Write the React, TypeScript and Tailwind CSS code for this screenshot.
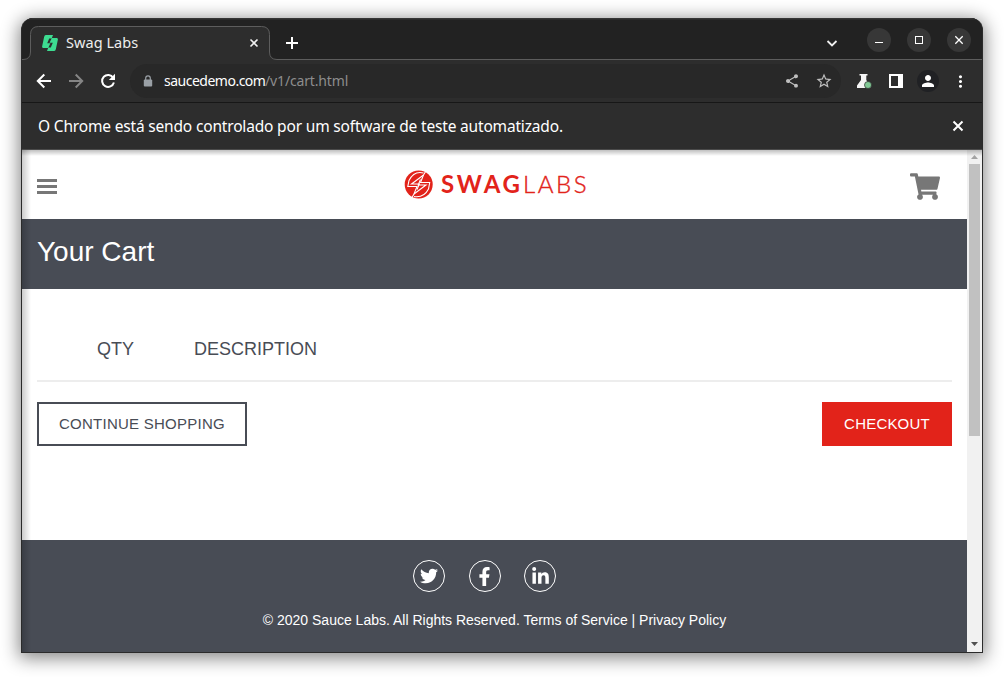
import React from "react";
import { MdMoreVert, MdPerson, MdShare, MdStarBorder } from "react-icons/md";
import { FaFacebookF, FaLinkedinIn, FaShoppingCart, FaTwitter } from "react-icons/fa";

interface LineIconProps {
  d: string;
  size: number;
  color?: string;
  weight?: number;
  className?: string;
}

function LineIcon({ d, size, color = "white", weight = 2, className }: LineIconProps) {
  return (
    <svg className={className} width={size} height={size} viewBox={`0 0 ${size} ${size}`} fill="none">
      <path d={d} stroke={color} strokeWidth={weight} />
    </svg>
  );
}

function SauceIcon() {
  return (
    <svg width="16" height="16" viewBox="0 0 16 16" fill="#3ddc91">
      <path d="M3.800 0H11L9.700 3.600H7.200L5.200 8.200H8.400L6.200 13H1.500Q-.3 13 .2 11L2.100 2Q2.500 0 3.800 0Z" />
      <path d="M12.200 16H5L6.300 12.400H8.800L10.800 7.800H7.600L9.800 3h4.700q1.800 0 1.300 2l-1.900 9q-.4 2-1.700 2Z" />
    </svg>
  );
}

function WindowButton({ children }: { children: React.ReactNode }) {
  return (
    <button className="flex h-6 w-6 items-center justify-center rounded-full bg-[#373737] text-white">
      {children}
    </button>
  );
}

function TabStrip() {
  return (
    <div className="relative h-[42px] shrink-0 bg-[#222222]">
      <svg className="absolute left-0 top-0" width="960" height="42" fill="none">
        <path
          d="M0 41.500H1Q8.500 41.500 8.500 34V16.500Q8.500 8.500 16.500 8.500H239.500Q247.500 8.500 247.500 16.500V34Q247.500 41.500 255 41.500H960V43H0Z"
          fill="#2d2d2d"
          stroke="#5d5d5d"
        />
        <path d="M0 .5H960" stroke="#363636" strokeWidth="2" />
      </svg>
      <div className="relative flex h-full items-center">
        <div className="ml-5 flex w-[218px] items-center pt-[7px]">
          <SauceIcon />
          <span className="-mt-0.5 ml-2 text-[14.500px] leading-4 tracking-[0.050px] text-[#eeeeee]">Swag Labs</span>
          <LineIcon className="ml-auto" size={12} d="M2.500 2.500l7 7M9.500 2.500l-7 7" weight={1.6} color="#f0f0f0" />
        </div>
        <LineIcon className="ml-[26px] mt-[8px]" size={12} d="M6 0v12M0 6h12" />
        <LineIcon className="ml-auto mt-[8px]" size={12} d="M1.500 4l4.500 4.500l4.500-4.500" color="#eeeeee" weight={1.8} />
        <div className="ml-[29px] mr-[11px] flex gap-4 pt-0.5">
          <WindowButton>
            <span className="mt-[5px] h-px w-2 bg-white" />
          </WindowButton>
          <WindowButton>
            <span className="h-2 w-2 border border-white" />
          </WindowButton>
          <WindowButton>
            <LineIcon size={12} d="M2.300 2.300l7.400 7.400M9.700 2.300l-7.400 7.400" weight={1.3} />
          </WindowButton>
        </div>
      </div>
    </div>
  );
}

function Toolbar() {
  return (
    <div className="flex h-[43px] shrink-0 items-center border-b border-[#171717] bg-[#2d2d2d] text-white">
      <LineIcon className="ml-[14px]" size={16} d="M15 8H2M8.300 1.500L1.800 8l6.500 6.500" />
      <LineIcon className="ml-4" size={16} color="#858585" d="M1 8h13M7.700 1.500L14.200 8l-6.500 6.500" />
      <svg className="ml-4" width="16" height="16" viewBox="0 0 16 16" fill="none">
        <path d="M13.200 4.700A6 6 0 1 0 13.900 9.500" stroke="white" strokeWidth="2" />
        <path d="M15 .8V7H8.800Z" fill="white" />
      </svg>
      <div className="ml-[14px] flex h-[34px] w-[711px] items-center rounded-full bg-[#282828]">
        <svg className="ml-3" width="12" height="12" viewBox="0 0 12 12" fill="none">
          <rect x="1.800" y="4.500" width="8.400" height="7" rx="1" fill="#9aa0a6" />
          <path d="M3.700 5V3.200a2.300 2.300 0 0 1 4.600 0V5" stroke="#9aa0a6" strokeWidth="1.200" />
        </svg>
        <span className="ml-[10px] flex whitespace-nowrap text-[14px] leading-5">
          <span className="w-[101px] tracking-[-0.500px]">saucedemo.com</span>
          <span className="tracking-[-0.150px] text-[#8d8d8d]">/v1/cart.html</span>
        </span>
        <MdShare className="ml-auto" size={16} color="#bebebe" />
        <MdStarBorder className="ml-[15px] mr-[8px]" size={18} color="#bebebe" />
      </div>
      <svg className="ml-[15px]" width="16" height="16" viewBox="0 0 16 16">
        <path d="M3.500 1h8v1.500h-1.200V7L15 15H1v-2.500L5 7V2.500H3.500Z" fill="#f5f5f5" />
        <circle cx="12" cy="12" r="3.500" fill="#81c995" stroke="#2d2d2d" strokeWidth=".7" />
      </svg>
      <span className="ml-[17px] h-[14px] w-[14px] border-2 border-r-[5px] border-white bg-[#2d2d2d]" />
      <span className="ml-[14px] flex h-[22px] w-[22px] items-center justify-center rounded-full bg-[#202124]">
        <MdPerson size={18} />
      </span>
      <MdMoreVert className="ml-3" size={19} />
    </div>
  );
}

function InfoBar() {
  return (
    <div className="flex h-[47px] shrink-0 items-center justify-between border-b border-[#4a4a4a] bg-[#2d2d2d] pl-4 pr-[18px] text-white">
      <span className="text-[15.500px] leading-6 tracking-[-0.175px]">
        O Chrome está sendo controlado por um software de teste automatizado.
      </span>
      <LineIcon size={12} d="M1.500 1.500l9 9M10.500 1.500l-9 9" weight={2} />
    </div>
  );
}

function SwagLogo() {
  return (
    <svg width="184" height="32" viewBox="0 0 184 32">
      <circle cx="14.700" cy="16.500" r="14" fill="#e2231a" />
      <g fill="none" stroke="white" strokeWidth="1.100">
        <path d="M22.500 2 19.500 7M10 26 7 31" />
        <path d="M19.500 5Q10 2.500 5 12.500L3.800 18.500H13L10 26" />
        <path d="M10 28.500q10 1.500 14.500-7.500L25.700 14.500H16.500L19.500 7" />
        <path d="M19.500 7 7.500 16H15.300L13 21.500M10 26 22 17H14.200L16.500 11.500" />
      </g>
      <g fill="#e2231a" fontFamily="Lato, sans-serif" fontSize="24">
        <text x="37" y="25" fontWeight="700" textLength="79" lengthAdjust="spacing">SWAG</text>
        <text x="119" y="25" fontWeight="300" stroke="#e2231a" strokeWidth=".4" textLength="63.500" lengthAdjust="spacing">LABS</text>
      </g>
    </svg>
  );
}

function SocialLink({ children }: { children: React.ReactNode }) {
  return (
    <a className="flex h-8 w-8 items-center justify-center rounded-full border border-white">
      {children}
    </a>
  );
}

function CartPage() {
  return (
    <div className="flex w-[945px] flex-col bg-white font-['Liberation_Sans',Arial,sans-serif] text-[#484c55]">
      <header className="flex h-[69px] items-center justify-between pl-[15px] pr-[27px]">
        <div className="flex w-[31px] flex-col gap-[3px] pt-1">
          <span className="h-[3px] w-5 bg-[#777777]" />
          <span className="h-[3px] w-5 bg-[#777777]" />
          <span className="h-[3px] w-5 bg-[#777777]" />
        </div>
        <div className="mb-[2px] ml-[14px]">
          <SwagLogo />
        </div>
        <FaShoppingCart className="mt-1 h-[27px] w-[30px]" color="#777777" />
      </header>
      <div className="h-[70px] bg-[#484c55] pl-[15px] pt-[17px] text-[28px] leading-8 text-white">Your Cart</div>
      <main className="h-[251px] px-[15px] pt-[43px]">
        <div className="flex h-[50px] gap-[60px] border-b-2 border-[#ededed] pl-[60px] pt-[5px] text-[18px] leading-6">
          <span className="w-[37px]">QTY</span>
          <span>DESCRIPTION</span>
        </div>
        <div className="mt-5 flex justify-between text-[15px]">
          <button className="h-11 w-[210px] border-2 border-[#484c55] tracking-[0.250px]">CONTINUE SHOPPING</button>
          <button className="h-11 w-[130px] bg-[#e2231a] tracking-[0.200px] text-white">CHECKOUT</button>
        </div>
      </main>
      <footer className="flex flex-1 flex-col items-center bg-[#484c55] pt-5 text-white">
        <div className="mr-[20px] flex gap-[23.500px]">
          <SocialLink><FaTwitter size={18} /></SocialLink>
          <SocialLink><FaFacebookF size={19} /></SocialLink>
          <SocialLink><FaLinkedinIn size={19} /></SocialLink>
        </div>
        <p className="mt-[19px] text-[14px] leading-[18px]">
          © 2020 Sauce Labs. All Rights Reserved. Terms of Service | Privacy Policy
        </p>
      </footer>
    </div>
  );
}

function Scrollbar() {
  return (
    <div className="flex w-[15px] flex-col items-center bg-[#f1f1f1]">
      <svg width="15" height="14"><path d="M4 9h7L7.500 5Z" fill="#a3a3a3" /></svg>
      <div className="h-[272px] w-[11px] bg-[#c1c1c1]" />
      <svg className="mt-auto" width="15" height="14"><path d="M4 4h7L7.500 8Z" fill="#505050" /></svg>
    </div>
  );
}

export default function App() {
  return (
    <div className="h-[677px] w-[1004px] overflow-hidden bg-white pl-[21px] pt-[18px] font-['Noto_Sans',sans-serif]">
      <div className="flex h-[635px] w-[962px] flex-col overflow-hidden rounded-t-xl border border-t-0 border-[#2b2b2b] bg-[#2d2d2d] shadow-[0_3px_18px_2px_rgba(0,0,0,0.48)]">
        <TabStrip />
        <Toolbar />
        <InfoBar />
        <div className="relative flex flex-1">
          <CartPage />
          <Scrollbar />
          <div className="absolute inset-y-0 left-0 w-[9px] bg-linear-to-r from-black/20 to-transparent" />
          <div className="absolute inset-x-0 top-0 h-[6px] bg-linear-to-b from-black/25 to-transparent" />
        </div>
      </div>
    </div>
  );
}
